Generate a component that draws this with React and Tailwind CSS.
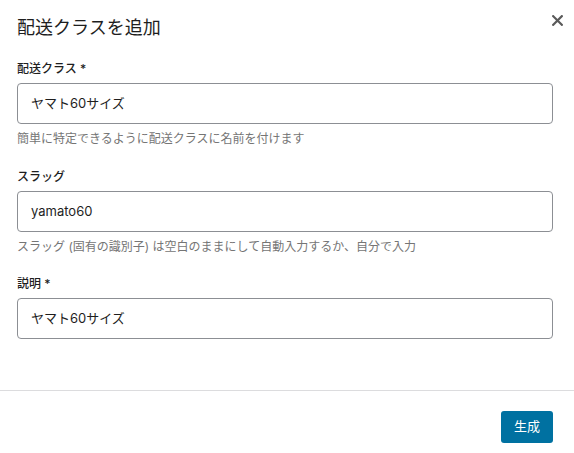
export default function App() {
  const font = { fontFamily: 'Inter, "Noto Sans CJK JP", sans-serif' };
  return (
    <div className="w-[574px] h-[453px] bg-white text-[#1e1e1e] flex flex-col" style={font}>
      <div className="flex items-start justify-between pl-[17px] pr-[11px] pt-[16px]">
        <h1 className="text-[18px] leading-[24px] font-normal">配送クラスを追加</h1>
        <button className="w-[12px] h-[12px] mt-[-2px] flex items-center justify-center text-[#555]">
          <svg width="11" height="11" viewBox="0 0 11 11">
            <path d="M1.2 1.2 L9.8 9.8 M9.8 1.2 L1.2 9.8" stroke="#5a5a5a" strokeWidth="2.2" strokeLinecap="square" />
          </svg>
        </button>
      </div>

      <div className="flex flex-col pl-[17px] pr-[21px] pt-[21px]">
        <label className="text-[12px] leading-[16px] font-medium">配送クラス *</label>
        <div className="mt-[6px] h-[41px] border border-[#8c8f94] rounded-[4px] flex items-center px-[13px] text-[13px]">
          ヤマト60サイズ
        </div>
        <p className="mt-[7px] text-[12px] leading-[16px] text-[#757575]">簡単に特定できるように配送クラスに名前を付けます</p>

        <label className="mt-[22px] text-[12px] leading-[16px] font-medium">スラッグ</label>
        <div className="mt-[6px] h-[41px] border border-[#8c8f94] rounded-[4px] flex items-center px-[13px] text-[13px]">
          yamato60
        </div>
        <p className="mt-[7px] text-[12px] leading-[16px] text-[#757575]">スラッグ (固有の識別子) は空白のままにして自動入力するか、自分で入力</p>

        <label className="mt-[21px] text-[12px] leading-[16px] font-medium">説明 *</label>
        <div className="mt-[6px] h-[41px] border border-[#8c8f94] rounded-[4px] flex items-center px-[13px] text-[13px]">
          ヤマト60サイズ
        </div>
      </div>

      <div className="mt-[51px] border-t border-[#dcdcde]"></div>
      <div className="flex justify-end pr-[21px] pt-[20px]">
        <button className="w-[52px] h-[32px] rounded-[3px] bg-[#0071a1] text-white text-[13px] flex items-center justify-center">
          生成
        </button>
      </div>
    </div>
  );
}
